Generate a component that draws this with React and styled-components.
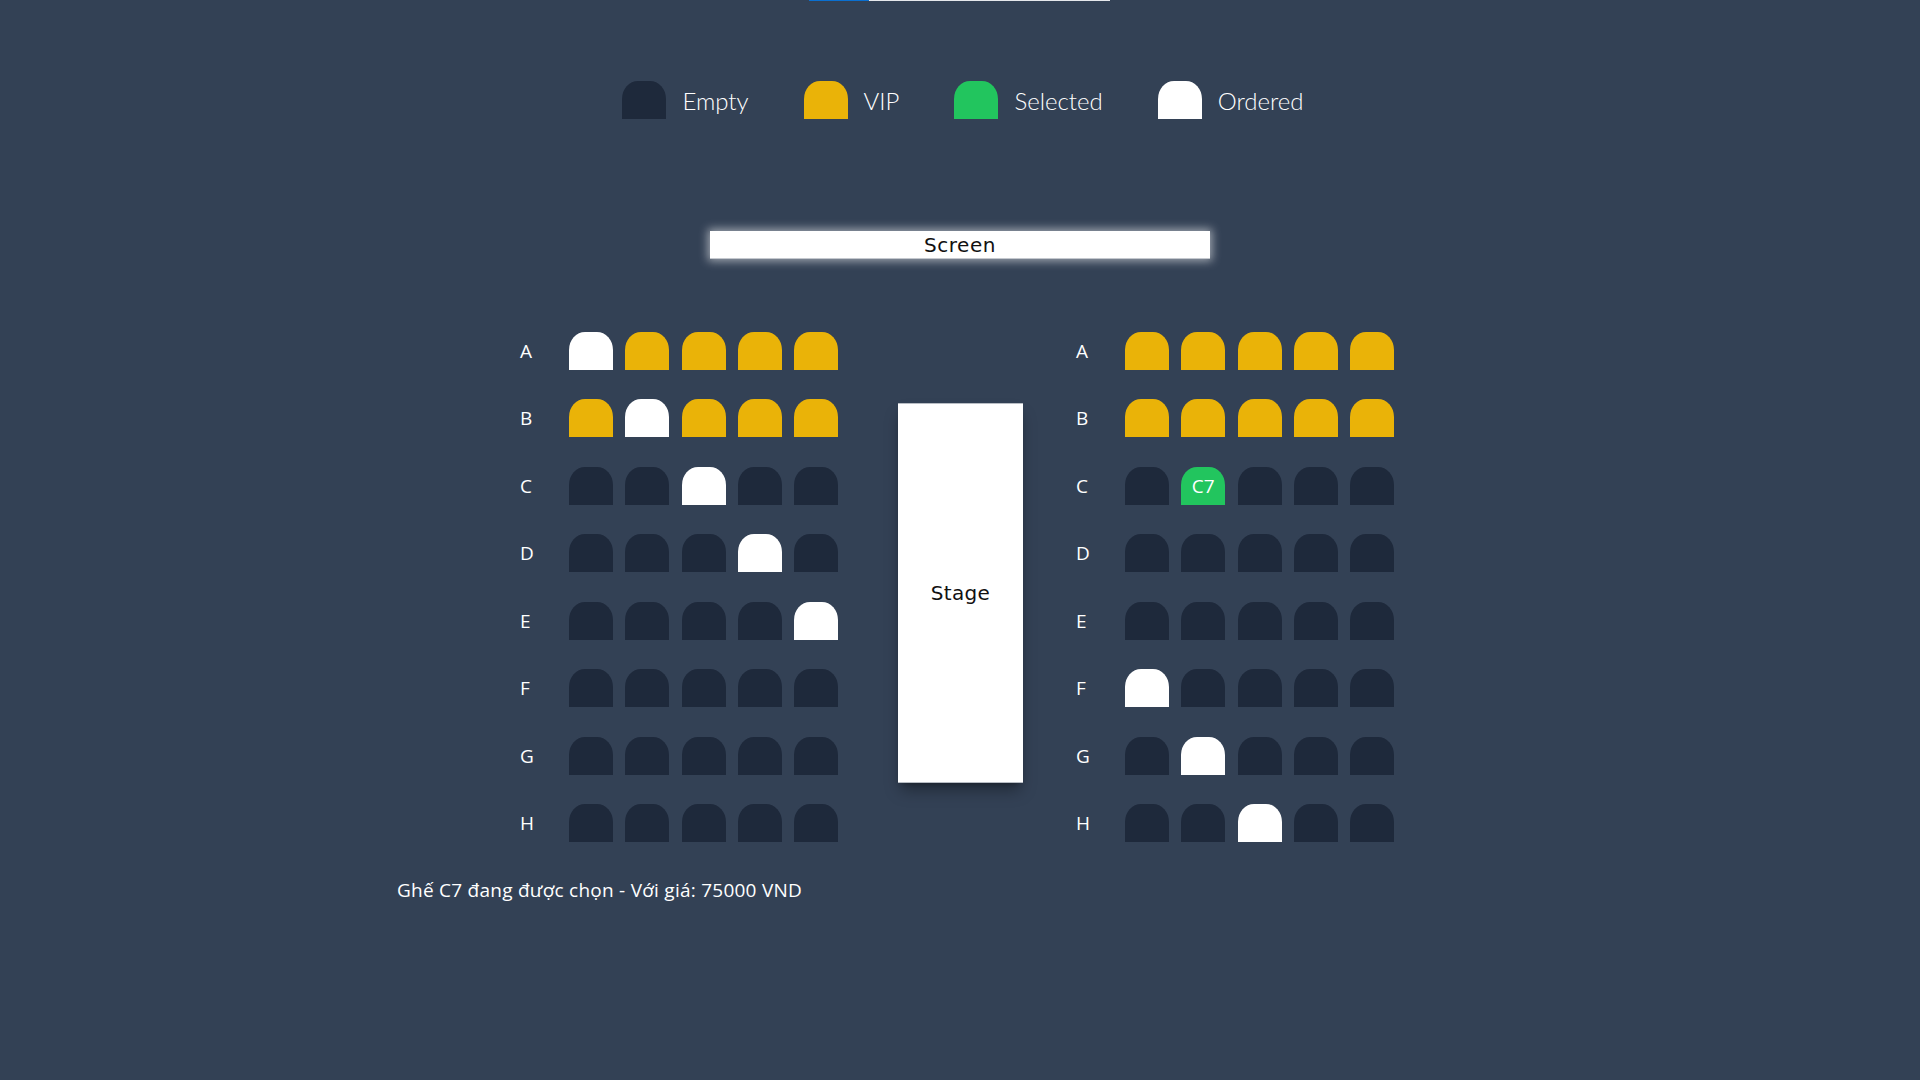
import React, { useState } from 'react';
import styled, { createGlobalStyle } from 'styled-components';

const ROWS = ['A', 'B', 'C', 'D', 'E', 'F', 'G', 'H'];
const VIP_ROWS = ['A', 'B'];
const ORDERED = ['A1', 'B2', 'C3', 'D4', 'E5', 'F6', 'G7', 'H8'];

const LEGEND = [
    { kind: 'empty', label: 'Empty' },
    { kind: 'vip', label: 'VIP' },
    { kind: 'selected', label: 'Selected' },
    { kind: 'ordered', label: 'Ordered' },
];

const seatColors = {
    empty: '#1e293b',
    vip: '#eab308',
    selected: '#22c55e',
    ordered: '#ffffff',
};

const getKind = (id, row, selected) => {
    if (ORDERED.includes(id)) return 'ordered';
    if (id === selected) return 'selected';
    if (VIP_ROWS.includes(row)) return 'vip';
    return 'empty';
};

const SeatBlock = ({ from, selected, onPick }) => (
    <Section>
        {ROWS.map(row => (
            <React.Fragment key={row}>
                <RowLabel>{row}</RowLabel>
                {[0, 1, 2, 3, 4].map(i => {
                    const id = row + (from + i);
                    const kind = getKind(id, row, selected);
                    return (
                        <Seat
                            key={id}
                            $kind={kind}
                            disabled={kind === 'ordered'}
                            onClick={() => onPick(id)}
                        >
                            {kind === 'selected' ? id : ''}
                        </Seat>
                    );
                })}
            </React.Fragment>
        ))}
    </Section>
);

const App = () => {
    const [selected, setSelected] = useState('C7');
    const price = selected && VIP_ROWS.includes(selected[0]) ? 90000 : 75000;

    return (
        <>
            <GlobalStyle />
            <Page>
                <TopBar>
                    <TopBarFill />
                </TopBar>

                <Legend>
                    {LEGEND.map(item => (
                        <LegendItem key={item.kind}>
                            <LegendSeat $kind={item.kind} />
                            <LegendText>{item.label}</LegendText>
                        </LegendItem>
                    ))}
                </Legend>

                <Screen>Screen</Screen>

                <Hall>
                    <SeatBlock from={1} selected={selected} onPick={setSelected} />
                    <Stage>Stage</Stage>
                    <SeatBlock from={6} selected={selected} onPick={setSelected} />
                </Hall>

                <Info>
                    {selected
                        ? `Ghế ${selected} đang được chọn - Với giá: ${price} VND`
                        : 'Chưa chọn ghế'}
                </Info>
            </Page>
        </>
    );
};

export default App;

const GlobalStyle = createGlobalStyle`
    html, body {
        margin: 0;
        padding: 0;
        background: #334155;
    }

    body {
        min-height: 100vh;
        font-family: "Open Sans", "Noto Sans", sans-serif;
        color: #ffffff;
    }
`

const Page = styled.div`
    min-height: 1080px;
    display: flex;
    flex-direction: column;
    align-items: center;
    background: #334155;
`

const TopBar = styled.div`
    width: 301px;
    height: 1px;
    background: #e5e7eb;
    margin-left: -1px;
`

const TopBarFill = styled.div`
    width: 60px;
    height: 100%;
    background: #0a6fd0;
`

const Legend = styled.div`
    display: flex;
    align-items: center;
    gap: 55px;
    margin-top: 79px;
    margin-left: 6px;
`

const LegendItem = styled.div`
    display: flex;
    align-items: center;
    gap: 16px;
`

const LegendSeat = styled.span`
    width: 44px;
    height: 38px;
    border-radius: 16px 16px 0 0 / 18px 18px 0 0;
    background: ${p => seatColors[p.$kind]};
`

const LegendText = styled.span`
    font-family: Lato, "Open Sans", sans-serif;
    font-weight: 300;
    font-size: 24px;
    line-height: 38px;
    color: #ffffff;
    margin-top: 2px;
`

const Screen = styled.div`
    width: 500px;
    height: 28px;
    margin-top: 111px;
    display: flex;
    align-items: center;
    justify-content: center;
    background: #ffffff;
    color: #111111;
    font-family: "DejaVu Sans", Verdana, sans-serif;
    font-size: 20px;
    letter-spacing: 0.5px;
    box-shadow: 0 0 10px 2px rgba(255, 255, 255, 0.55);
    border-bottom: 1px solid #c4c8ce;
    box-sizing: border-box;
`

const Hall = styled.div`
    display: flex;
    align-items: center;
    margin-top: 73px;
    padding-right: 6px;
`

const Section = styled.div`
    display: grid;
    grid-template-columns: 36.75px repeat(5, 44px);
    grid-auto-rows: 38px;
    column-gap: 12.25px;
    row-gap: 29.43px;
    align-items: center;
`

const RowLabel = styled.span`
    font-family: "Open Sans", "Noto Sans", sans-serif;
    font-size: 19px;
    color: #ffffff;
    line-height: 38px;
`

const Seat = styled.button`
    width: 44px;
    height: 38px;
    padding: 0;
    border: none;
    border-radius: 16px 16px 0 0 / 18px 18px 0 0;
    background: ${p => seatColors[p.$kind]};
    color: #ffffff;
    font-family: "Open Sans", "Noto Sans", sans-serif;
    font-size: 19px;
    line-height: 38px;
    cursor: ${p => (p.$kind === 'ordered' ? 'default' : 'pointer')};

    &:disabled {
        color: #ffffff;
    }
`

const Stage = styled.div`
    width: 125px;
    height: 380px;
    margin: 12px 53px 0 60px;
    display: flex;
    align-items: center;
    justify-content: center;
    background: #ffffff;
    color: #111111;
    font-family: "DejaVu Sans", Verdana, sans-serif;
    font-size: 20px;
    letter-spacing: 0.3px;
    border-top: 1px solid #b8bdc4;
    border-bottom: 1px solid #b8bdc4;
    box-sizing: border-box;
    box-shadow: 0 10px 15px -3px rgba(0, 0, 0, 0.35), 0 4px 6px -4px rgba(0, 0, 0, 0.35);
`

const Info = styled.p`
    width: 1126px;
    margin: 35px 0 0;
    font-family: "Open Sans", "Noto Sans", sans-serif;
    font-size: 19px;
    letter-spacing: 0.25px;
    line-height: 26px;
    color: #ffffff;
`
